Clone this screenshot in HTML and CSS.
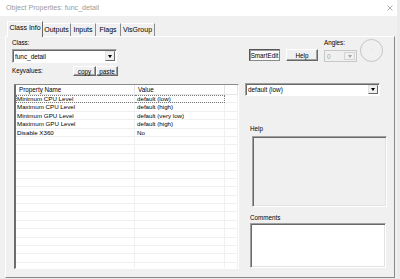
FILE: index.html
```html
<!DOCTYPE html>
<html lang="en">
<head>
    <meta charset="UTF-8">
    <title>Object Properties: func_detail</title>
    <link rel="stylesheet" href="styles.css">
</head>
<body>
    <div class="window">
        <div class="titlebar">
            <span class="title">Object Properties: func_detail</span>
            <svg class="close" width="6" height="6" viewBox="0 0 6 6">
                <path d="M0.5 0.5 L5.5 5.5 M5.5 0.5 L0.5 5.5" stroke="#9a9a9a" stroke-width="0.8" fill="none"/>
            </svg>
        </div>
        <div class="client">
            <div class="tabs">
                <div class="tab active tab-class">Class Info</div>
                <div class="tab tab-outputs">Outputs</div>
                <div class="tab tab-inputs">Inputs</div>
                <div class="tab tab-flags">Flags</div>
                <div class="tab tab-vis">VisGroup</div>
            </div>
            <div class="panel">
                <div class="left">
                    <div class="label">Class:</div>
                    <div class="combo class-combo">
                        <span class="combo-text">func_detail</span>
                        <span class="drop"><span class="arrow"></span></span>
                    </div>
                    <div class="kv-row">
                        <span class="label kv-label">Keyvalues:</span>
                        <button class="btn btn-copy">copy</button>
                        <button class="btn btn-paste">paste</button>
                    </div>
                    <div class="list">
                        <div class="list-head">
                            <div class="head-cell">Property Name</div>
                            <div class="head-cell">Value</div>
                            <div class="head-cell"></div>
                        </div>
                        <div class="row focused"><div class="cell name">Minimum CPU Level</div><div class="cell">default (low)</div><div class="cell"></div></div>
                        <div class="row"><div class="cell name">Maximum CPU Level</div><div class="cell">default (high)</div><div class="cell"></div></div>
                        <div class="row"><div class="cell name">Minimum GPU Level</div><div class="cell">default (very low)</div><div class="cell"></div></div>
                        <div class="row"><div class="cell name">Maximum GPU Level</div><div class="cell">default (high)</div><div class="cell"></div></div>
                        <div class="row"><div class="cell name">Disable X360</div><div class="cell">No</div><div class="cell"></div></div>
                        <div class="row"><div class="cell"></div><div class="cell"></div><div class="cell"></div></div>
                        <div class="row"><div class="cell"></div><div class="cell"></div><div class="cell"></div></div>
                        <div class="row"><div class="cell"></div><div class="cell"></div><div class="cell"></div></div>
                        <div class="row"><div class="cell"></div><div class="cell"></div><div class="cell"></div></div>
                        <div class="row"><div class="cell"></div><div class="cell"></div><div class="cell"></div></div>
                        <div class="row"><div class="cell"></div><div class="cell"></div><div class="cell"></div></div>
                        <div class="row"><div class="cell"></div><div class="cell"></div><div class="cell"></div></div>
                        <div class="row"><div class="cell"></div><div class="cell"></div><div class="cell"></div></div>
                        <div class="row"><div class="cell"></div><div class="cell"></div><div class="cell"></div></div>
                        <div class="row"><div class="cell"></div><div class="cell"></div><div class="cell"></div></div>
                        <div class="row"><div class="cell"></div><div class="cell"></div><div class="cell"></div></div>
                        <div class="row"><div class="cell"></div><div class="cell"></div><div class="cell"></div></div>
                        <div class="row"><div class="cell"></div><div class="cell"></div><div class="cell"></div></div>
                        <div class="row"><div class="cell"></div><div class="cell"></div><div class="cell"></div></div>
                        <div class="row"><div class="cell"></div><div class="cell"></div><div class="cell"></div></div>
                        <div class="row"><div class="cell"></div><div class="cell"></div><div class="cell"></div></div>
                    </div>
                </div>
                <div class="right">
                    <div class="top-row">
                        <button class="btn btn-smartedit">SmartEdit</button>
                        <button class="btn btn-help">Help</button>
                        <div class="angles">
                            <span class="label">Angles:</span>
                            <div class="combo angle-combo">
                                <span class="combo-text">0</span>
                                <span class="drop"><span class="arrow"></span></span>
                            </div>
                        </div>
                        <svg class="dial" width="23" height="23" viewBox="0 0 23 23">
                            <circle cx="11.5" cy="11.5" r="11" stroke="#c4c4c4" stroke-width="1" fill="none"/>
                            <circle cx="11.5" cy="10.5" r="0.6" fill="#d8d8d8"/>
                        </svg>
                    </div>
                    <div class="combo value-combo">
                        <span class="combo-text">default (low)</span>
                        <span class="drop"><span class="arrow"></span></span>
                    </div>
                    <div class="label side-label help-label">Help</div>
                    <div class="box help-box"></div>
                    <div class="label side-label comments-label">Comments</div>
                    <div class="box comments-box"></div>
                </div>
            </div>
        </div>
    </div>
</body>
</html>
```

FILE: styles.css
```css
body {
    margin: 0;
    background-color: #ebebeb;
    font-family: "Liberation Sans", Arial, sans-serif;
    color: #000;
}

.window {
    width: 397px;
    height: 278px;
    display: flex;
    flex-direction: column;
}

.titlebar {
    height: 16px;
    background-color: #fff;
    display: flex;
    align-items: center;
    justify-content: space-between;
    padding: 0 4px 0 6px;
}

.title {
    font-size: 7.1px;
    color: #9a9a9a;
}

.close {
    display: block;
    margin-bottom: 1px;
}

.client {
    flex: 1;
    display: flex;
    flex-direction: column;
    background-color: #f0f0f0;
    padding: 0 2px 0 5px;
}

/* tab strip */
.tabs {
    height: 20px;
    display: flex;
    align-items: flex-end;
    padding-left: 2px;
}

.tab {
    box-sizing: border-box;
    height: 13px;
    padding-top: 2px;
    font-size: 7px;
    line-height: 8px;
    text-align: center;
    border-top: 1px solid #fff;
    border-right: 1px solid #8a8a8a;
}

.tab.active {
    position: relative;
    z-index: 1;
    height: 16px;
    margin-bottom: -1px;
    background-color: #f0f0f0;
    border-left: 1px solid #fff;
    border-right: 1px solid #696969;
}

.tab-class { width: 36px; }
.tab-outputs { width: 28px; }
.tab-inputs { width: 25px; }
.tab-flags { width: 25px; }
.tab-vis { width: 34px; }

.panel {
    flex: 1;
    box-sizing: border-box;
    display: flex;
    gap: 6px;
    padding: 2px 6px 0 6px;
    border-top: 1px solid #fff;
    border-left: 1px solid #fff;
    border-right: 1px solid #8a8a8a;
    border-bottom: 1px solid #8a8a8a;
}

.label {
    font-size: 6.3px;
    line-height: 8px;
    height: 8px;
}

/* left column */
.left {
    width: 227px;
    display: flex;
    flex-direction: column;
}

.combo {
    box-sizing: border-box;
    display: flex;
    align-items: center;
    background-color: #fff;
    border: 1px solid;
    border-color: #a0a0a0 #fff #fff #a0a0a0;
    box-shadow: inset 1px 1px #696969;
}

.combo-text {
    flex: 1;
    font-size: 6.4px;
    padding-left: 2px;
}

.drop {
    box-sizing: border-box;
    width: 10px;
    align-self: stretch;
    margin: 1px 1px 1px 0;
    display: flex;
    align-items: center;
    justify-content: center;
    background-color: #f0f0f0;
    border: 1px solid;
    border-color: #e3e3e3 #696969 #696969 #e3e3e3;
}

.arrow {
    width: 0;
    height: 0;
    border-left: 2.5px solid transparent;
    border-right: 2.5px solid transparent;
    border-top: 3px solid #000;
}

.class-combo {
    width: 105px;
    height: 14px;
    margin-top: 2px;
}

.kv-row {
    display: flex;
    align-items: center;
    height: 10px;
    margin-top: 3px;
}

.kv-label {
    width: 61px;
}

.btn {
    box-sizing: border-box;
    height: 10px;
    padding: 0;
    font-family: "Liberation Sans", Arial, sans-serif;
    font-size: 6.3px;
    color: #000;
    background-color: #f0f0f0;
    border: 1px solid;
    border-color: #fff #696969 #696969 #fff;
    box-shadow: inset -1px -1px #a0a0a0;
}

.btn-copy { width: 23px; }
.btn-paste { width: 22px; }

/* property list */
.list {
    box-sizing: border-box;
    width: 225px;
    height: 185px;
    margin: 8px 0 0 2px;
    background-color: #fff;
    overflow: hidden;
    border-top: 1px solid #8a8a8a;
    border-left: 2px solid #6d6d6d;
    border-right: 1px solid #fff;
    border-bottom: 1px solid #fff;
}

.list-head,
.row {
    display: grid;
    grid-template-columns: 119px 90px 1fr;
    box-sizing: border-box;
}

.list-head {
    height: 10px;
    border-bottom: 1px solid #e5e5e5;
}

.head-cell {
    font-size: 6.3px;
    line-height: 9px;
    padding-left: 3px;
    border-right: 1px solid #e5e5e5;
}

.row {
    height: 8.4px;
    border-bottom: 1px solid #f0f0f0;
}

.cell {
    font-size: 6.2px;
    line-height: 7.4px;
    padding-left: 2px;
    border-right: 1px solid #f0f0f0;
    white-space: nowrap;
}

.cell.name {
    padding-left: 1px;
}

.row.focused .cell:nth-child(-n+2) {
    border-top: 1px dotted #7a7a7a;
    border-bottom: 1px dotted #7a7a7a;
    line-height: 6px;
    margin-bottom: -1px;
}

.row.focused .cell.name {
    border-left: 1px dotted #7a7a7a;
    padding-left: 0;
}

.row.focused .cell:nth-child(2) {
    border-right: 1px dotted #7a7a7a;
}

/* right column */
.right {
    width: 142px;
    display: flex;
    flex-direction: column;
}

.top-row {
    height: 23px;
    display: flex;
    align-items: flex-end;
}

.btn-smartedit {
    width: 31px;
    height: 12px;
    margin: 0 0 1px 4px;
    background-color: #fbfbfb;
    border-color: #555 #8a8a8a #8a8a8a #555;
    box-shadow: inset 1px 1px #a0a0a0;
}

.btn-help {
    width: 32px;
    height: 12px;
    margin: 0 0 1px 6px;
}

.angles {
    width: 33px;
    margin-left: 6px;
    display: flex;
    flex-direction: column;
    gap: 3px;
}

.angle-combo {
    height: 12px;
    background-color: #f0f0f0;
    border-color: #c8c8c8;
    box-shadow: none;
}

.angle-combo .combo-text {
    color: #a6a6a6;
}

.angle-combo .drop {
    width: 11px;
    border-color: #d4d4d4;
}

.angle-combo .arrow {
    border-top-color: #a6a6a6;
}

.dial {
    display: block;
    margin-left: 3px;
    align-self: flex-start;
}

.value-combo {
    width: 135px;
    height: 13px;
    margin-top: 21px;
}

.side-label {
    margin-left: 5px;
}

.help-label {
    margin-top: 29px;
}

.comments-label {
    margin-top: 7px;
}

.box {
    box-sizing: border-box;
    border: 1px solid;
    border-color: #a0a0a0 #fff #fff #a0a0a0;
    box-shadow: inset 1px 1px #696969, inset -1px -1px #e3e3e3;
}

.help-box {
    width: 135px;
    height: 71px;
    margin: 3px 0 0 7px;
    background-color: #f0f0f0;
}

.comments-box {
    width: 136px;
    height: 45px;
    margin: 1px 0 0 5px;
    background-color: #fff;
}
```
